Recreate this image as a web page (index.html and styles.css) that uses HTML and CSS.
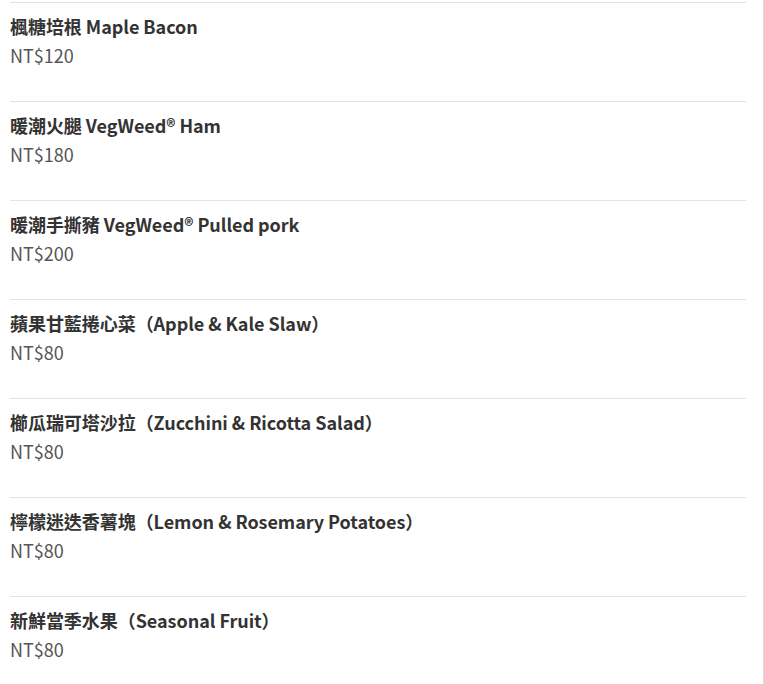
FILE: index.html
```html
<!DOCTYPE html>
<html lang="zh-Hant">
<head>
<meta charset="utf-8">
<title>Menu</title>
<link rel="stylesheet" href="styles.css">
</head>
<body>
<div class="page">
  <ul class="menu">
    <li class="item"><div class="name">楓糖培根 Maple Bacon</div><div class="price">NT$120</div></li>
    <li class="item"><div class="name">暖潮火腿 VegWeed® Ham</div><div class="price">NT$180</div></li>
    <li class="item"><div class="name">暖潮手撕豬 VegWeed® Pulled pork</div><div class="price">NT$200</div></li>
    <li class="item"><div class="name">蘋果甘藍捲心菜（Apple &amp; Kale Slaw）</div><div class="price">NT$80</div></li>
    <li class="item"><div class="name">櫛瓜瑞可塔沙拉（Zucchini &amp; Ricotta Salad）</div><div class="price">NT$80</div></li>
    <li class="item"><div class="name">檸檬迷迭香薯塊（Lemon &amp; Rosemary Potatoes）</div><div class="price">NT$80</div></li>
    <li class="item"><div class="name">新鮮當季水果（Seasonal Fruit）</div><div class="price">NT$80</div></li>
  </ul>
</div>
</body>
</html>
```
FILE: styles.css
```css
html, body {
  margin: 0;
  padding: 0;
  background: #fff;
}
body {
  font-family: "Noto Sans CJK TC", "Noto Sans", sans-serif;
  color: #333;
  overflow: hidden;
}
.page {
  box-sizing: border-box;
  width: 764px;
  height: 684px;
  border-right: 1px solid #d9d9d9;
  padding: 2px 17px 0 10px;
}
.menu {
  list-style: none;
  margin: 0;
  padding: 0;
}
.item {
  border-top: 1px solid #e3e3e3;
  padding: 9px 0 31px 0;
}
.name {
  font-size: 18px;
  font-weight: 700;
  line-height: 29px;
  letter-spacing: -0.05px;
  color: #333;
}
.price {
  font-size: 18px;
  font-weight: 400;
  line-height: 29px;
  color: #555;
}
```
